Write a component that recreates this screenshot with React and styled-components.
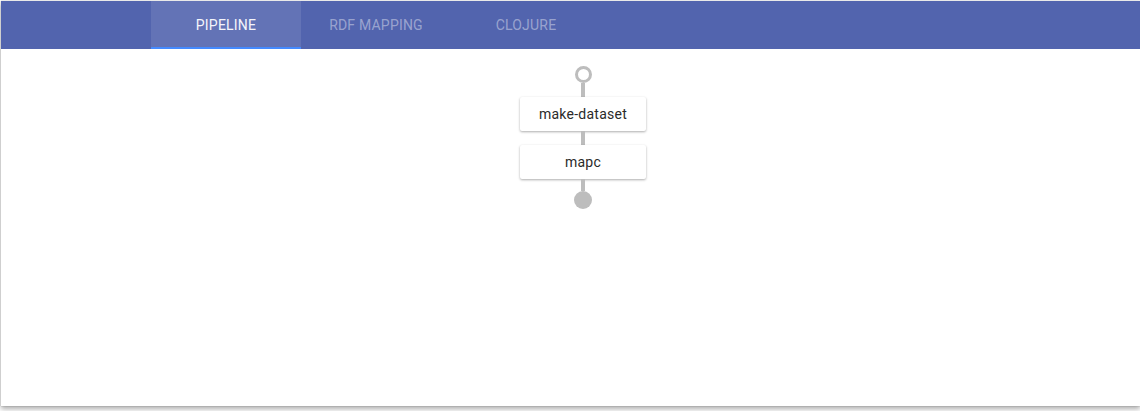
import React from "react";
import styled, { createGlobalStyle } from "styled-components";

const Global = createGlobalStyle`
  html, body { margin: 0; padding: 0; background: #ffffff; }
  body { font-family: Roboto, "Noto Sans", sans-serif; }
`;

const Page = styled.div`
  padding: 1px 0 0 1px;
  width: 1140px;
  height: 411px;
  box-sizing: border-box;
  background: #fff;
  overflow: hidden;
`;

const Card = styled.div`
  height: 405px;
  background: #fff;
  box-shadow: 0 0 1px rgba(0, 0, 0, 0.35), 0 3px 5px rgba(0, 0, 0, 0.32);
  display: flex;
  flex-direction: column;
`;

const TabBar = styled.div`
  height: 48px;
  background: #5264ae;
  display: flex;
  padding-left: 150px;
`;

const Tab = styled.div`
  width: 150px;
  height: 48px;
  box-sizing: border-box;
  display: flex;
  align-items: center;
  justify-content: center;
  font-size: 14px;
  letter-spacing: 0.2px;
  text-transform: uppercase;
  color: ${(p) => (p.$active ? "#f4f5fb" : "rgba(255,255,255,0.42)")};
  background: ${(p) => (p.$active ? "rgba(255,255,255,0.1)" : "transparent")};
  border-bottom: 2px solid ${(p) => (p.$active ? "#448aff" : "transparent")};
  padding-top: 2px;
`;

const Canvas = styled.div`
  flex: 1;
  display: flex;
  flex-direction: column;
  align-items: center;
  padding: 17px 0 0 25px;
`;

const Connector = styled.div`
  width: 4px;
  height: ${(p) => p.$h}px;
  background: #bdbdbd;
`;

const StartRing = styled.div`
  width: 17px;
  height: 17px;
  box-sizing: border-box;
  border: 3px solid #bdbdbd;
  border-radius: 50%;
`;

const EndDot = styled.div`
  width: 18px;
  height: 18px;
  border-radius: 50%;
  background: #bdbdbd;
`;

const Node = styled.div`
  width: 126px;
  height: 34px;
  background: #fff;
  display: flex;
  align-items: center;
  justify-content: center;
  font-size: 14px;
  letter-spacing: 0.25px;
  color: #2a2a2a;
  box-shadow: 0 1px 3px rgba(0, 0, 0, 0.2), 0 1px 2px rgba(0, 0, 0, 0.14);
  border-radius: 2px;
`;

export default function App() {
  return (
    <>
      <Global />
      <Page>
        <Card>
          <TabBar>
            <Tab $active>Pipeline</Tab>
            <Tab>RDF Mapping</Tab>
            <Tab>Clojure</Tab>
          </TabBar>
          <Canvas>
            <StartRing />
            <Connector $h={14} />
            <Node>make-dataset</Node>
            <Connector $h={14} />
            <Node>mapc</Node>
            <Connector $h={12} />
            <EndDot />
          </Canvas>
        </Card>
      </Page>
    </>
  );
}
